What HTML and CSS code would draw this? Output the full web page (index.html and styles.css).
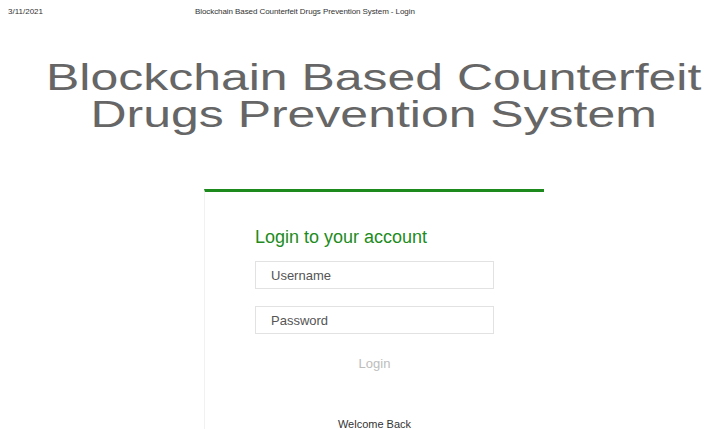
FILE: index.html
```html
<!DOCTYPE html>
<html lang="en">
<head>
<meta charset="utf-8">
<title>Blockchain Based Counterfeit Drugs Prevention System - Login</title>
<link rel="stylesheet" href="styles.css">
</head>
<body>
  <header class="print-head">
    <span class="print-date">3/11/2021</span>
    <span class="print-title">Blockchain Based Counterfeit Drugs Prevention System - Login</span>
  </header>
  <main class="page">
    <h1 class="site-title">Blockchain Based Counterfeit<br>Drugs Prevention System</h1>
    <section class="login-card">
      <h2 class="login-heading">Login to your account</h2>
      <form class="login-form">
        <input class="field" type="text" placeholder="Username">
        <input class="field" type="password" placeholder="Password">
        <button class="login-btn" type="button">Login</button>
      </form>
      <p class="welcome">Welcome Back</p>
    </section>
  </main>
</body>
</html>
```
FILE: styles.css
```css
* { box-sizing: border-box; }

html, body {
  margin: 0;
  background: #ffffff;
  font-family: "Liberation Sans", Arial, sans-serif;
}

.print-head {
  display: flex;
  align-items: center;
  height: 22px;
  padding: 0 8px;
  font-size: 8px;
  color: #333;
}

.print-title {
  margin-left: 152px;
  letter-spacing: -0.08px;
}

.page {
  display: flex;
  flex-direction: column;
  align-items: center;
  padding-left: 32px;
}

/* the site banner uses a wide, stretched face */
.site-title {
  margin: 37px 0 0;
  font-size: 37px;
  line-height: 37px;
  font-weight: normal;
  color: #666;
  text-align: center;
  transform: scaleX(1.35);
}

.login-card {
  width: 340px;
  margin-top: 56px;
  padding: 35px 50px 0;
  border-top: 3px solid #1c8a1c;
  border-left: 1px solid #f1f1f1;
  display: flex;
  flex-direction: column;
}

.login-heading {
  margin: 0;
  font-size: 18px;
  line-height: 21px;
  font-weight: normal;
  color: #218b21;
}

.login-form {
  display: flex;
  flex-direction: column;
  gap: 17px;
  margin-top: 13px;
}

.field {
  width: 239px;
  height: 28px;
  border: 1px solid #e2e2e2;
  padding: 0 15px;
  font-family: inherit;
  font-size: 13px;
  color: #444;
  outline: none;
}

.field::placeholder {
  color: #555;
}

.login-btn {
  align-self: center;
  margin-top: 5px;
  border: none;
  background: none;
  font-family: inherit;
  font-size: 13px;
  line-height: 15px;
  color: #bdbdbd;
  padding: 0;
}

.welcome {
  margin: 47px 0 0;
  text-align: center;
  font-size: 11px;
  line-height: 13px;
  color: #333;
}
```
